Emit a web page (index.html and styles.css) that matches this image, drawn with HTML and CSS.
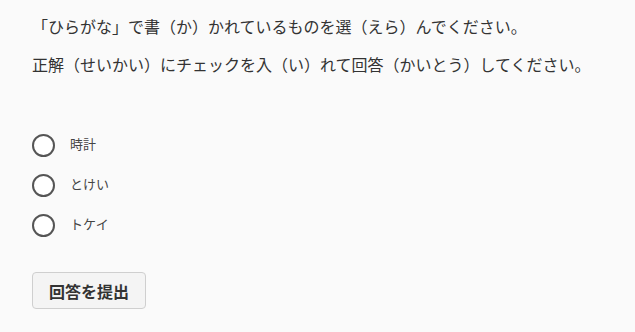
FILE: index.html
```html
<!DOCTYPE html>
<html lang="ja">
<head>
<meta charset="utf-8">
<title>クイズ</title>
<link rel="stylesheet" href="styles.css">
</head>
<body>
<main class="quiz">
  <div class="question">
    <p>「ひらがな」で書（か）かれているものを選（えら）んでください。</p>
    <p>正解（せいかい）にチェックを入（い）れて回答（かいとう）してください。</p>
  </div>
  <form class="answer">
    <div class="options">
      <label class="option"><input type="radio" name="a" class="radio"><span class="label">時計</span></label>
      <label class="option"><input type="radio" name="a" class="radio"><span class="label">とけい</span></label>
      <label class="option"><input type="radio" name="a" class="radio"><span class="label">トケイ</span></label>
    </div>
    <button type="button" class="submit">回答を提出</button>
  </form>
</main>
</body>
</html>
```
FILE: styles.css
```css
html, body {
  margin: 0;
  background: #fafafa;
}
body {
  font-family: "Noto Sans CJK JP", "Noto Sans", sans-serif;
  color: #333;
}
.quiz {
  padding: 15px 32px 0;
}
.question p {
  margin: 0 0 15px;
  font-size: 16px;
  line-height: 23px;
}
.answer {
  display: flex;
  flex-direction: column;
  align-items: flex-start;
  margin-top: 49px;
}
.options {
  display: flex;
  flex-direction: column;
}
.option {
  display: flex;
  align-items: center;
  height: 40px;
  gap: 15px;
}
.radio {
  appearance: none;
  -webkit-appearance: none;
  margin: 0;
  width: 23px;
  height: 23px;
  border: 2px solid #555;
  border-radius: 50%;
  box-sizing: border-box;
  background: #fff;
}
.label {
  font-size: 13px;
  line-height: 18px;
  color: #444;
  margin-top: -2px;
}
.submit {
  margin-top: 27px;
  height: 37px;
  padding: 0 16px;
  border: 1px solid #cfcfcf;
  border-radius: 4px;
  background: #f4f4f4;
  font-family: inherit;
  font-size: 16px;
  font-weight: bold;
  color: #333;
}
```
